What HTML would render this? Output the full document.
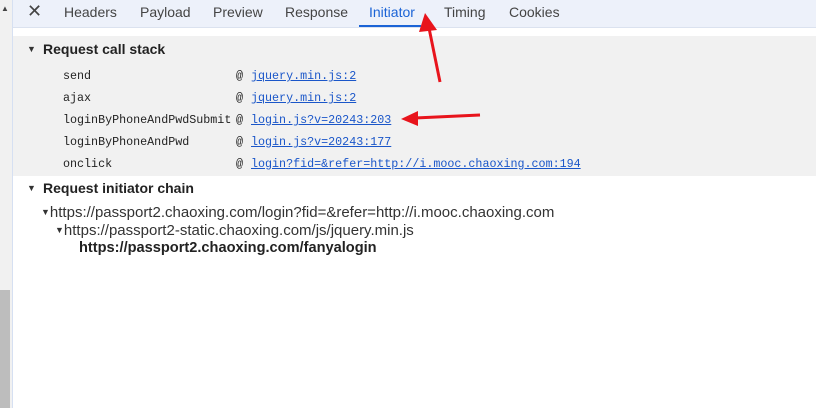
<!DOCTYPE html><html><head><style>
body{margin:0;width:816px;height:408px;overflow:hidden;background:#fff;font-family:"Liberation Sans",sans-serif;position:relative}
.a{position:absolute;white-space:nowrap}
.m{font-family:"Liberation Mono",monospace;font-size:11.7px;color:#222}
.l{color:#1a56c9;text-decoration:underline}
.t{font-size:14px;color:#444;top:4px}
</style></head><body>
<div class="a" style="left:0;top:0;width:12px;height:408px;background:#f1f1f1"></div>
<div class="a" style="left:0;top:290px;width:10px;height:118px;background:#bdbdbd"></div>
<div class="a" style="left:1px;top:4px;font-size:8px;color:#444">▲</div>
<div class="a" style="left:12px;top:0;width:1px;height:408px;background:#d6e0f2"></div>
<div class="a" style="left:13px;top:0;width:803px;height:27px;background:#edf1fa;border-bottom:1px solid #dbe2ef"></div>
<div class="a" style="left:27px;top:1px;font-size:18px;color:#444">✕</div>
<div class="a t" style="left:64px">Headers</div>
<div class="a t" style="left:140px">Payload</div>
<div class="a t" style="left:213px">Preview</div>
<div class="a t" style="left:285px">Response</div>
<div class="a t" style="left:369px;color:#1a63d6">Initiator</div>
<div class="a t" style="left:444px">Timing</div>
<div class="a t" style="left:509px">Cookies</div>
<div class="a" style="left:359px;top:25px;width:62px;height:2px;background:#1a63d6"></div>
<div class="a" style="left:13px;top:36px;width:803px;height:140px;background:#f1f1f1"></div>
<div class="a" style="left:27px;top:44px;font-size:9px;color:#333">▼</div>
<div class="a" style="left:43px;top:41px;font-size:14px;font-weight:bold;color:#222">Request call stack</div>
<div class="a m" style="left:63px;top:69px">send</div><div class="a m" style="left:236px;top:69px">@</div><div class="a m l" style="left:251px;top:69px">jquery.min.js:2</div>
<div class="a m" style="left:63px;top:91px">ajax</div><div class="a m" style="left:236px;top:91px">@</div><div class="a m l" style="left:251px;top:91px">jquery.min.js:2</div>
<div class="a m" style="left:63px;top:113px">loginByPhoneAndPwdSubmit</div><div class="a m" style="left:236px;top:113px">@</div><div class="a m l" style="left:251px;top:113px">login.js?v=20243:203</div>
<div class="a m" style="left:63px;top:135px">loginByPhoneAndPwd</div><div class="a m" style="left:236px;top:135px">@</div><div class="a m l" style="left:251px;top:135px">login.js?v=20243:177</div>
<div class="a m" style="left:63px;top:157px">onclick</div><div class="a m" style="left:236px;top:157px">@</div><div class="a m l" style="left:251px;top:157px">login?fid=&amp;refer=http://i.mooc.chaoxing.com:194</div>
<div class="a" style="left:27px;top:183px;font-size:9px;color:#333">▼</div>
<div class="a" style="left:43px;top:180px;font-size:14px;font-weight:bold;color:#222">Request initiator chain</div>
<div class="a" style="left:41px;top:204px;font-size:15px;color:#333"><span style="font-size:9px;vertical-align:2px">▼</span>https://passport2.chaoxing.com/login?fid=&amp;refer=http://i.mooc.chaoxing.com</div>
<div class="a" style="left:55px;top:222px;font-size:15px;color:#333"><span style="font-size:9px;vertical-align:2px">▼</span>https://passport2-static.chaoxing.com/js/jquery.min.js</div>
<div class="a" style="left:79px;top:240px;font-size:14.6px;font-weight:bold;color:#222">https://passport2.chaoxing.com/fanyalogin</div>
<svg class="a" style="left:0;top:0" width="816" height="408">
<line x1="440" y1="82" x2="429" y2="28" stroke="#e8141c" stroke-width="3"/>
<polygon points="425,13 419,32 437,30" fill="#e8141c"/>
<line x1="480" y1="115" x2="415" y2="118" stroke="#e8141c" stroke-width="3"/>
<polygon points="401,119 418,111 418,126" fill="#e8141c"/>
</svg>
</body></html>
